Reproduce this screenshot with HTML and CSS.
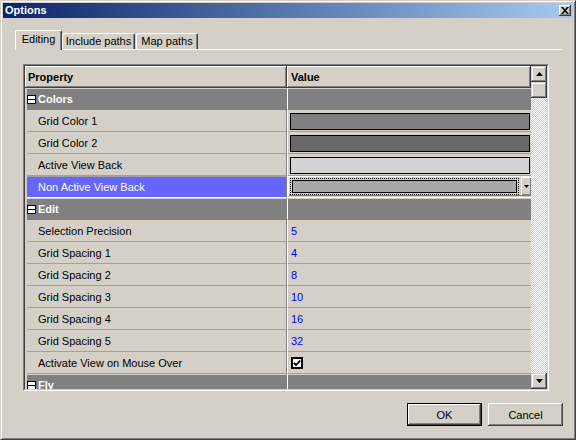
FILE: index.html
```html
<!DOCTYPE html>
<html>
<head>
<meta charset="utf-8">
<title>Options</title>
<link rel="stylesheet" href="styles.css">
</head>
<body>
<div class="window">
  <div class="titlebar">
    <span class="title">Options</span>
    <span class="close"><svg width="8" height="7" viewBox="0 0 8 7"><path d="M0 0h2l2 2.2L6 0h2L5 3.5 8 7H6L4 4.8 2 7H0l3-3.5z" fill="#000"/></svg></span>
  </div>
  <div class="tabstrip">
    <div class="tab active">Editing</div>
    <div class="tab t2">Include paths</div>
    <div class="tab t3">Map paths</div>
  </div>
  <div class="grid">
    <div class="grid-inner">
      <div class="grid-main">
        <div class="header">
          <div class="hcell hprop">Property</div>
          <div class="hcell hval">Value</div>
        </div>
        <div class="rows">
          <div class="row cat"><div class="pcell"><span class="minus"></span>Colors</div><div class="vcell"></div></div>
          <div class="row"><div class="pcell">Grid Color 1</div><div class="vcell"><div class="swatch sw-gray"></div></div></div>
          <div class="row"><div class="pcell">Grid Color 2</div><div class="vcell"><div class="swatch sw-dim"></div></div></div>
          <div class="row"><div class="pcell">Active View Back</div><div class="vcell"><div class="swatch sw-light"></div></div></div>
          <div class="row sel"><div class="pcell">Non Active View Back</div><div class="vcell editcell">
            <div class="editor">
              <div class="focus"><div class="edit-box"></div></div>
              <div class="dd"><svg width="5" height="3" viewBox="0 0 5 3"><path d="M0 0h5L2.5 3z" fill="#000"/></svg></div>
            </div>
          </div></div>
          <div class="row cat"><div class="pcell"><span class="minus"></span>Edit</div><div class="vcell"></div></div>
          <div class="row"><div class="pcell">Selection Precision</div><div class="vcell"><span class="num">5</span></div></div>
          <div class="row"><div class="pcell">Grid Spacing 1</div><div class="vcell"><span class="num">4</span></div></div>
          <div class="row"><div class="pcell">Grid Spacing 2</div><div class="vcell"><span class="num">8</span></div></div>
          <div class="row"><div class="pcell">Grid Spacing 3</div><div class="vcell"><span class="num">10</span></div></div>
          <div class="row"><div class="pcell">Grid Spacing 4</div><div class="vcell"><span class="num">16</span></div></div>
          <div class="row"><div class="pcell">Grid Spacing 5</div><div class="vcell"><span class="num">32</span></div></div>
          <div class="row"><div class="pcell">Activate View on Mouse Over</div><div class="vcell"><span class="check"><svg width="8" height="8" viewBox="0 0 8 8"><path d="M0.8 3.8 L3 6 L7.2 1.6" fill="none" stroke="#000" stroke-width="1.8"/></svg></span></div></div>
          <div class="row cat"><div class="pcell"><span class="minus"></span>Fly</div><div class="vcell"></div></div>
        </div>
      </div>
      <div class="vscroll">
        <div class="sbtn"><svg width="7" height="4" viewBox="0 0 7 4"><path d="M3.5 0L7 4H0z" fill="#000"/></svg></div>
        <div class="sbtn thumb"></div>
        <div class="track"></div>
        <div class="sbtn"><svg width="7" height="4" viewBox="0 0 7 4"><path d="M0 0h7L3.5 4z" fill="#000"/></svg></div>
      </div>
    </div>
  </div>
  <div class="buttons">
    <button class="btn default">OK</button>
    <button class="btn">Cancel</button>
  </div>
</div>
</body>
</html>
```

FILE: styles.css
```css
html, body {
  margin: 0;
  padding: 0;
  background: #d4d0c8;
}

body {
  font: 11px "Liberation Sans", Arial, sans-serif;
  color: #000;
}

.window {
  width: 576px;
  height: 440px;
  box-sizing: border-box;
  border: 1px solid;
  border-color: #d4d0c8 #404040 #404040 #d4d0c8;
  box-shadow: inset 1px 1px #fff, inset -1px -1px #808080;
  padding: 2px;
  background: #d4d0c8;
  display: flex;
  flex-direction: column;
}

/* Title bar */
.titlebar {
  height: 15px;
  flex: none;
  background: linear-gradient(to right, #0a246a, #a6caf0);
  display: flex;
  align-items: center;
  justify-content: space-between;
  padding: 0 2px 0 2px;
}

.title {
  color: #fff;
  font-weight: bold;
  font-size: 11px;
  line-height: 15px;
}

.close {
  width: 12px;
  height: 11px;
  box-sizing: border-box;
  background: #d4d0c8;
  box-shadow: inset -1px -1px #404040, inset 1px 1px #fff, inset -2px -2px #808080;
  display: flex;
  align-items: center;
  justify-content: center;
  padding: 0 1px 1px 0;
}

.close svg {
  display: block;
}

/* Tabs */
.tabstrip {
  flex: none;
  display: flex;
  align-items: flex-end;
  height: 20px;
  box-sizing: border-box;
  margin: 12px 11px 0 12px;
  border-bottom: 1px solid #fff;
}

.tab {
  box-sizing: border-box;
  border-top: 1px solid #fff;
  border-left: 1px solid #fff;
  border-right: 1px solid #404040;
  box-shadow: inset -1px 0 #808080;
  border-radius: 2px 2px 0 0;
  display: flex;
  align-items: center;
  justify-content: center;
  background: #d4d0c8;
  white-space: nowrap;
}

.tab.active {
  width: 47px;
  height: 20px;
  margin-bottom: -1px;
  padding-bottom: 3px;
}

.t2 {
  width: 73px;
  height: 16px;
  padding-bottom: 1px;
}

.t3 {
  width: 62px;
  height: 16px;
  margin-left: 1px;
  padding-bottom: 1px;
}

/* Property grid */
.grid {
  flex: none;
  margin: 14px 0 0 20px;
  width: 526px;
  height: 327px;
  box-sizing: border-box;
  border: 1px solid;
  border-color: #808080 #fff #fff #808080;
}

.grid-inner {
  height: 100%;
  box-sizing: border-box;
  border: 1px solid;
  border-color: #404040 #d4d0c8 #d4d0c8 #404040;
  display: flex;
}

.grid-main {
  flex: 1;
  overflow: hidden;
  display: flex;
  flex-direction: column;
}

.header {
  display: flex;
  height: 22px;
  flex: none;
}

.hcell {
  box-sizing: border-box;
  height: 22px;
  border-right: 1px solid #404040;
  border-bottom: 1px solid #404040;
  box-shadow: inset 1px 1px #fff, inset -1px -1px #808080;
  font-weight: bold;
  display: flex;
  align-items: center;
}

.hprop {
  width: 262px;
  padding-left: 3px;
}

.hval {
  flex: 1;
  padding-left: 4px;
}

.rows {
  padding-left: 2px;
  display: flex;
  flex-direction: column;
}

.row {
  display: flex;
  height: 22px;
  flex: none;
}

.pcell {
  width: 260px;
  box-sizing: border-box;
  border-right: 1px solid #808080;
  border-bottom: 1px solid #a0a0a0;
  padding-left: 11px;
  display: flex;
  align-items: center;
  white-space: nowrap;
}

.vcell {
  flex: 1;
  box-sizing: border-box;
  border-left: 1px solid #fff;
  border-bottom: 1px solid #a0a0a0;
  display: flex;
  align-items: center;
}

.cat .pcell,
.cat .vcell {
  background: #808080;
  border-bottom-color: #808080;
  border-top: 1px solid #d4d0c8;
}

.cat .pcell {
  padding-left: 0;
  color: #fff;
  font-weight: bold;
}

.minus {
  width: 9px;
  height: 9px;
  box-sizing: border-box;
  border: 1px solid #000;
  background: linear-gradient(#fff 0 3px, #000 3px 4px, #fff 4px);
  margin-right: 2px;
}

.sel .pcell {
  background: #6666ff;
  color: #fff;
  border-bottom-color: #fff;
  border-top: 1px solid #a0a0a0;
}

.sel .vcell {
  border-bottom-color: #fff;
}

.swatch {
  flex: 1;
  height: 17px;
  box-sizing: border-box;
  border: 1px solid #000;
  margin: 1px 1px 0 2px;
}

.sw-gray { background: #808080; }
.sw-dim { background: #696969; }
.sw-light { background: #d3d3d3; }

.editcell {
  align-items: stretch;
}

.editor {
  flex: 1;
  display: flex;
  align-items: stretch;
  margin: 0 0 1px 0;
  box-shadow: inset 1px 1px #fff, inset -1px -1px #808080;
  padding: 2px 0 1px 2px;
}

.focus {
  flex: 1;
  border: 1px dotted #000;
  padding: 1px;
  display: flex;
}

.edit-box {
  flex: 1;
  border: 1px solid #000;
  background: #a9a9a9;
}

.dd {
  width: 10px;
  margin-left: 2px;
  box-sizing: border-box;
  box-shadow: inset 1px 1px #fff, inset -1px -1px #808080;
  display: flex;
  align-items: center;
  justify-content: center;
  margin-top: -1px;
}

.num {
  color: #0000ff;
  padding-left: 3px;
}

.check {
  width: 12px;
  height: 12px;
  box-sizing: border-box;
  border: 2px solid #000;
  background: #fff;
  margin-left: 3px;
  display: flex;
  align-items: center;
  justify-content: center;
}

.check svg {
  display: block;
}

/* Scrollbar */
.vscroll {
  width: 16px;
  flex: none;
  display: flex;
  flex-direction: column;
}

.sbtn {
  height: 16px;
  flex: none;
  box-sizing: border-box;
  background: #d4d0c8;
  box-shadow: inset -1px -1px #404040, inset 1px 1px #d4d0c8, inset -2px -2px #808080, inset 2px 2px #fff;
  display: flex;
  align-items: center;
  justify-content: center;
}

.sbtn svg {
  display: block;
}

.track {
  flex: 1;
  background: repeating-conic-gradient(#fff 0 25%, #d4d0c8 0 50%) 0 0 / 2px 2px;
}

/* Buttons */
.buttons {
  flex: none;
  display: flex;
  justify-content: flex-end;
  gap: 6px;
  margin-top: 12px;
  padding-right: 10px;
}

.btn {
  width: 75px;
  height: 23px;
  box-sizing: border-box;
  padding: 0;
  font: 11px "Liberation Sans", Arial, sans-serif;
  color: #000;
  background: #d4d0c8;
  border: none;
  box-shadow: inset -1px -1px #404040, inset 1px 1px #fff, inset -2px -2px #808080;
}

.btn.default {
  border: 1px solid #000;
  box-shadow: inset -1px -1px #404040, inset 1px 1px #fff, inset -2px -2px #808080;
}
```
